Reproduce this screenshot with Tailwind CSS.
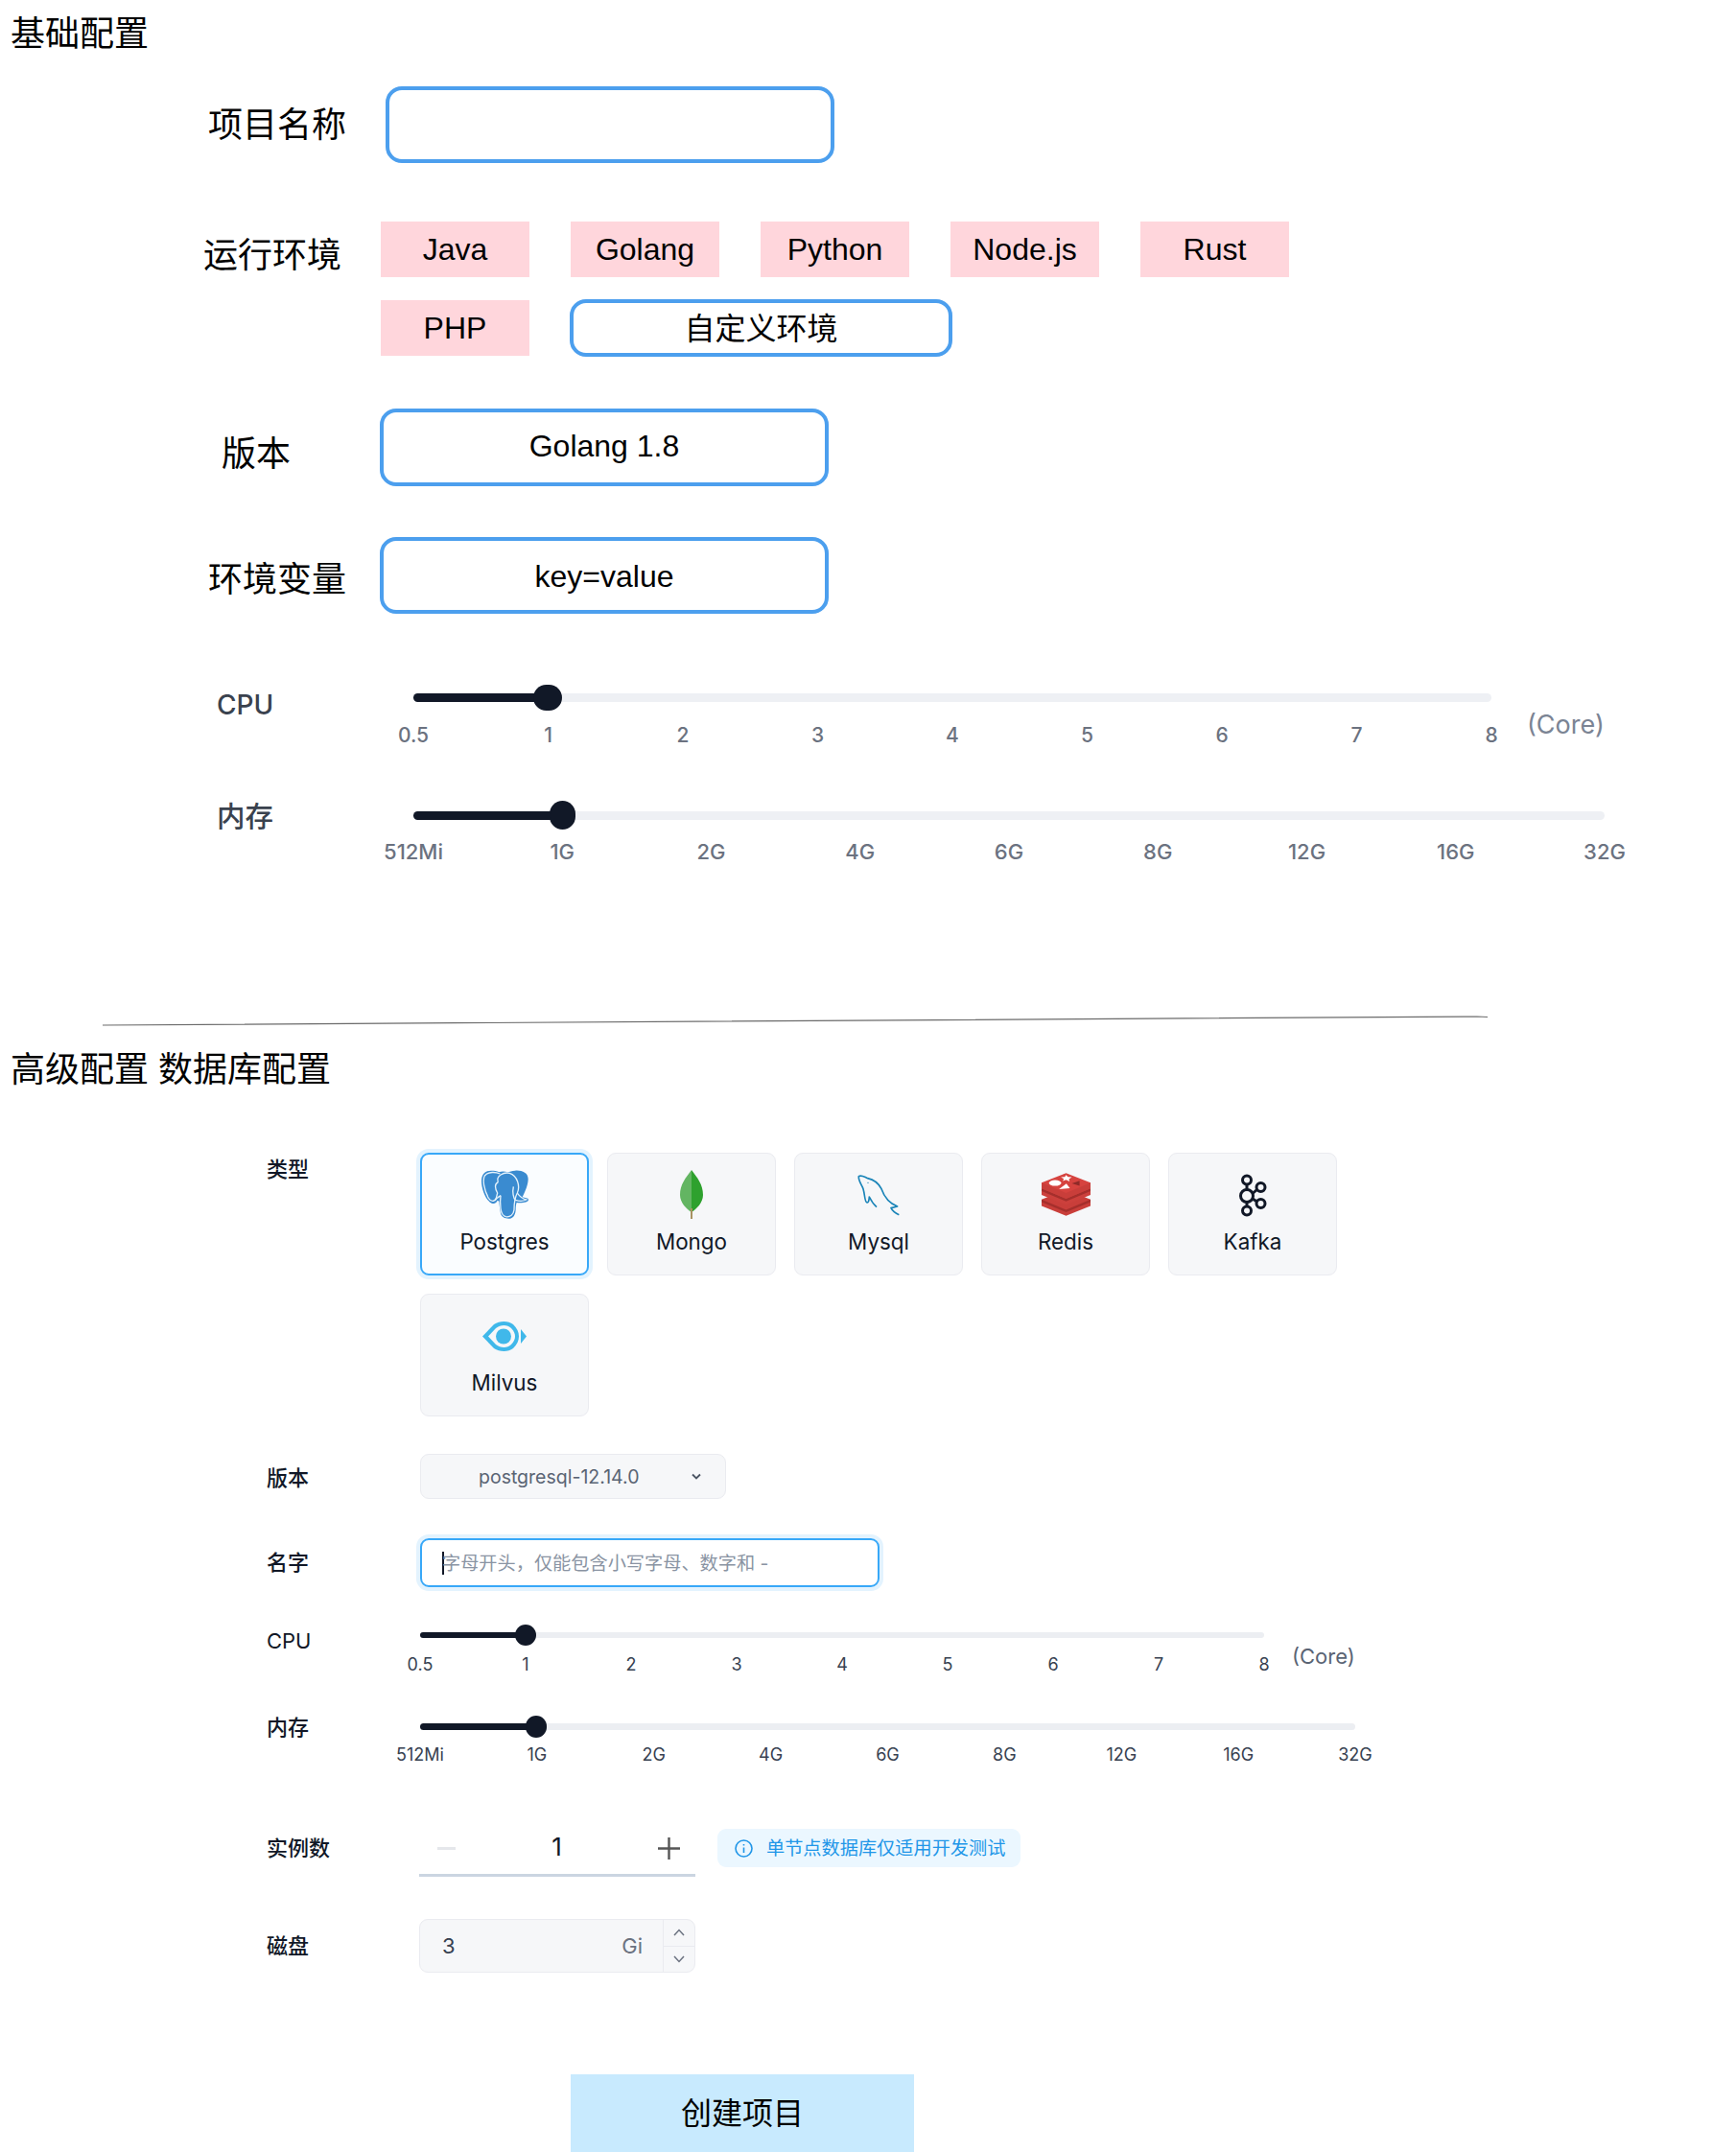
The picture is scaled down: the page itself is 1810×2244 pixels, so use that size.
<!DOCTYPE html>
<html lang="zh">
<head>
    <meta charset="UTF-8">
    <title>创建项目</title>
    <script src="https://cdn.jsdelivr.net/npm/@tailwindcss/browser@4"></script>
</head>
<body class="bg-white text-black [font-family:'Liberation_Sans','Noto_Sans_CJK_SC',sans-serif]">
<div class="w-[1810px] h-[2244px] overflow-hidden">

    <!-- 基础配置 -->
    <h2 class="pt-[18px] pl-[11px] text-[36px] leading-[36px] font-normal">基础配置</h2>

    <div class="flex mt-[36px]">
        <div class="w-[402px] pl-[217px] pt-[23px] text-[36px] leading-[36px]">项目名称</div>
        <input class="w-[468px] h-[80px] border-4 border-[#4c9fee] rounded-[17px] outline-none">
    </div>

    <div class="flex mt-[61px]">
        <div class="w-[397px] pl-[212px] pt-[18px] text-[36px] leading-[36px]">运行环境</div>
        <div class="w-[950px] flex flex-wrap items-center gap-x-[43px] gap-y-[23px] text-[32px]">
            <div class="w-[155px] h-[58px] bg-[#ffd6dc] flex items-center justify-center">Java</div>
            <div class="w-[155px] h-[58px] bg-[#ffd6dc] flex items-center justify-center">Golang</div>
            <div class="w-[155px] h-[58px] bg-[#ffd6dc] flex items-center justify-center">Python</div>
            <div class="w-[155px] h-[58px] bg-[#ffd6dc] flex items-center justify-center">Node.js</div>
            <div class="w-[155px] h-[58px] bg-[#ffd6dc] flex items-center justify-center">Rust</div>
            <div class="w-[155px] h-[58px] bg-[#ffd6dc] flex items-center justify-center">PHP</div>
            <div class="-ml-[1px] w-[399px] h-[60px] border-4 border-[#4c9fee] rounded-[17px] flex items-center justify-center pt-[2px]">自定义环境</div>
        </div>
    </div>

    <div class="flex mt-[54px]">
        <div class="w-[396px] pl-[231px] pt-[30px] text-[36px] leading-[36px]">版本</div>
        <div class="w-[468px] h-[81px] border-4 border-[#4c9fee] rounded-[17px] flex items-center justify-center text-[32px] pb-[4px]">Golang 1.8</div>
    </div>

    <div class="flex mt-[53px]">
        <div class="w-[396px] pl-[217px] pt-[27px] text-[36px] leading-[36px]">环境变量</div>
        <div class="w-[468px] h-[80px] border-4 border-[#4c9fee] rounded-[17px] flex items-center justify-center text-[32px] pt-[1px]">key=value</div>
    </div>

    <div class="flex mt-[83px] [font-family:'Inter','Noto_Sans_CJK_SC',sans-serif]">
        <div class="w-[431px] pl-[226px] -mt-[2px] text-[28px] leading-[28px] font-medium text-[#3a424e] h-0">CPU</div>
        <div class="w-[1124px]">
            <div class="relative h-[9px] rounded-full bg-[#eef0f4]">
                <div class="absolute left-0 top-0 w-[140px] h-[9px] rounded-full bg-[#111827]"></div>
                <div class="absolute left-[125px] -top-[9px] w-[30px] h-[27px] rounded-full bg-[#111827]"></div>
            </div>
            <div class="flex justify-between mt-[23px] text-[21px] leading-[24px] font-medium text-[#6b7280]">
                <span class="w-0 flex justify-center">0.5</span><span class="w-0 flex justify-center">1</span><span class="w-0 flex justify-center">2</span><span class="w-0 flex justify-center">3</span><span class="w-0 flex justify-center">4</span><span class="w-0 flex justify-center">5</span><span class="w-0 flex justify-center">6</span><span class="w-0 flex justify-center">7</span><span class="w-0 flex justify-center">8</span>
            </div>
        </div>
        <div class="ml-[37px] mt-[18px] text-[27px] leading-[30px] text-[#7b8494]">(Core)</div>
    </div>

    <div class="flex mt-[67px] [font-family:'Inter','Noto_Sans_CJK_SC',sans-serif]">
        <div class="w-[431px] pl-[226px] -mt-[10px] text-[29.5px] leading-[30px] font-medium text-[#3a424e] h-0">内存</div>
        <div class="w-[1242px]">
            <div class="relative h-[9px] rounded-full bg-[#eef0f4]">
                <div class="absolute left-0 top-0 w-[155px] h-[9px] rounded-full bg-[#111827]"></div>
                <div class="absolute left-[142px] -top-[11px] w-[27px] h-[30px] rounded-full bg-[#111827]"></div>
            </div>
            <div class="flex justify-between mt-[21px] text-[22px] leading-[24px] font-medium text-[#6b7280] whitespace-nowrap">
                <span class="w-0 flex justify-center">512Mi</span><span class="w-0 flex justify-center">1G</span><span class="w-0 flex justify-center">2G</span><span class="w-0 flex justify-center">4G</span><span class="w-0 flex justify-center">6G</span><span class="w-0 flex justify-center">8G</span><span class="w-0 flex justify-center">12G</span><span class="w-0 flex justify-center">16G</span><span class="w-0 flex justify-center">32G</span>
            </div>
        </div>
    </div>

    <svg class="block mt-[158px]" width="1810" height="12" viewBox="0 0 1810 12"><path d="M107 11 L1540 2 L1551 2.5" fill="none" stroke="#6b6b6b" stroke-width="1.2"/></svg>

    <!-- 高级配置 -->
    <h2 class="mt-[26px] pl-[11px] text-[36px] leading-[40px] font-normal">高级配置 数据库配置</h2>

    <div class="[font-family:'Inter','Noto_Sans_CJK_SC',sans-serif] text-[#111827]">
        <div class="flex mt-[66px]">
            <div class="w-[438px] pl-[278px] pt-[3px] text-[22px] leading-[28px] font-medium">类型</div>
            <div class="w-[960px] flex flex-wrap gap-[19px] text-[22.4px] leading-[28px]">
                <div class="w-[176px] h-[128px] rounded-[9px] border-2 border-[#38a8f8] bg-[#fafdff] ring-4 ring-[#e3f3fe] flex flex-col items-center">
                    <div class="h-[77px] pt-[8px] flex items-center">
                        <svg class="mt-[-2px]" width="49" height="51" viewBox="0 0 147 153">
                            <path d="M30 2C10 2 0 15 0 35C0 60 15 100 35 105C42 107 48 100 50 95L55 98C56 110 58 125 60 135C62 148 75 153 88 152C100 150 106 140 107 125C107 115 108 108 110 102C125 104 147 102 147 92C147 88 135 88 128 85C138 65 146 45 146 28C146 8 125 0 105 2C95 3 88 5 82 7C72 4 62 4 55 7C48 3 40 2 30 2Z" fill="#3a8bd0"/>
                            <path d="M58 12C45 6 22 4 10 18C3 30 7 60 22 88C30 100 40 100 46 88L50 72C42 58 40 44 52 38" fill="none" stroke="#e4f2fb" stroke-width="4"/>
                            <path d="M52 38C44 18 70 6 88 10C112 18 122 50 112 72C104 86 102 100 102 125C100 142 88 148 76 146C66 144 62 135 60 120C58 105 58 95 60 80" fill="none" stroke="#e4f2fb" stroke-width="4"/>
                            <path d="M60 80C50 86 44 92 42 96M112 72C120 84 128 90 140 93C130 98 118 98 106 94C100 88 96 70 100 52" fill="none" stroke="#e4f2fb" stroke-width="4"/>
                        </svg>
                    </div>
                    <span>Postgres</span>
                </div>
                <div class="w-[176px] h-[128px] rounded-[9px] border border-[#eaebf0] bg-[#f6f7f9] flex flex-col items-center">
                    <div class="h-[78px] pt-[7px] flex items-center">
                        <svg width="24" height="51" viewBox="0 0 24 51">
                            <path d="M12 0C6 8 0 15 0 26C0 34 7 41 12 44Z" fill="#63b562"/>
                            <path d="M12 0C18 8 24 15 24 26C24 34 17 41 12 44Z" fill="#2ea12e"/>
                            <path d="M12 40V51" stroke="#a89262" stroke-width="2"/>
                        </svg>
                    </div>
                    <span>Mongo</span>
                </div>
                <div class="w-[176px] h-[128px] rounded-[9px] border border-[#eaebf0] bg-[#f6f7f9] flex flex-col items-center">
                    <div class="h-[78px] pt-[7px] flex items-center">
                        <svg width="44" height="44" viewBox="70 58 132 132">
                            <path d="M130 162C122 155 112 140 107 130C106 140 106 148 100 148C92 146 94 125 88 105C84 92 72 80 74 66C82 60 92 68 102 72C120 76 135 86 145 105C152 125 165 148 195 160L175 165C180 175 190 182 200 186" fill="none" stroke="#1a84b8" stroke-width="5" stroke-linejoin="round"/>
                            <circle cx="103" cy="86" r="2" fill="#1a84b8"/>
                        </svg>
                    </div>
                    <span>Mysql</span>
                </div>
                <div class="w-[176px] h-[128px] rounded-[9px] border border-[#eaebf0] bg-[#f6f7f9] flex flex-col items-center">
                    <div class="h-[78px] pt-[7px] flex items-center">
                        <svg width="51" height="45" viewBox="0 0 152 133">
                            <path d="M0 82L76 52L152 82V102L76 133L0 102Z" fill="#c93e3a"/>
                            <path d="M0 82L76 114L152 82V90L76 122L0 90Z" fill="#a52f2c"/>
                            <path d="M0 48L76 18L152 48V68L76 99L0 68Z" fill="#cc403c"/>
                            <path d="M0 48L76 80L152 48V56L76 88L0 56Z" fill="#a52f2c"/>
                            <path d="M0 30L76 0L152 30V34L76 66L0 34Z" fill="#d6433f"/>
                            <path d="M0 30V48L76 80L152 48V30L76 62Z" fill="#c93e3a"/>
                            <ellipse cx="42" cy="31" rx="19" ry="9" fill="#fff"/>
                            <path d="M76 6L82 12L94 13L85 19L87 26L76 21L66 25L69 18L60 13L72 12Z" fill="#fff"/>
                            <path d="M54 50L88 47L77 33Z" fill="#fff"/>
                            <path d="M94 32L118 24L118 40Z" fill="#8f2a28"/>
                        </svg>
                    </div>
                    <span>Redis</span>
                </div>
                <div class="w-[176px] h-[128px] rounded-[9px] border border-[#eaebf0] bg-[#f6f7f9] flex flex-col items-center">
                    <div class="h-[78px] pt-[8px] flex items-center">
                        <svg width="30" height="45" viewBox="0 0 30 45">
                            <g fill="none" stroke="#111827" stroke-width="3">
                                <circle cx="9" cy="6.5" r="4.5"/><circle cx="9" cy="23" r="6.5"/><circle cx="9" cy="38.5" r="4.5"/><circle cx="23.5" cy="14" r="4.5"/><circle cx="23.5" cy="31" r="4.5"/>
                                <path d="M9 11V16.5M9 29.5V34M15 20.5L19.5 16.5M15 26L19.5 29"/>
                            </g>
                        </svg>
                    </div>
                    <span>Kafka</span>
                </div>
                <div class="w-[176px] h-[128px] rounded-[9px] border border-[#eaebf0] bg-[#f6f7f9] flex flex-col items-center">
                    <div class="h-[78px] pt-[9px] flex items-center">
                        <svg width="46" height="31" viewBox="0 0 46 31">
                            <path d="M0 15.5L12 3C18 -1 27 -1 32 3C36 7 38 11 38 15.5C38 20 36 24 32 28C27 32 18 32 12 28Z" fill="#40b8ea"/>
                            <path d="M6 15.5L14 7C19 3 26 3 30 7C33 10 34 13 34 15.5C34 18 33 21 30 24C26 28 19 28 14 24Z" fill="#f6f7f9"/>
                            <circle cx="22" cy="15.5" r="8" fill="#40b8ea"/>
                            <path d="M40 8L46 15.5L40 23Z" fill="#40b8ea"/>
                        </svg>
                    </div>
                    <span>Milvus</span>
                </div>
            </div>
        </div>

        <div class="flex items-center mt-[39px]">
            <div class="w-[438px] pl-[278px] pt-[3px] text-[22px] leading-[28px] font-medium">版本</div>
            <div class="relative w-[319px] h-[47px] rounded-[9px] border border-[#eaebf0] bg-[#f6f7f9] text-[19.5px] text-[#5a6474] flex items-center pl-[60px] pt-[3px]">
                postgresql-12.14.0
                <svg class="absolute left-[281px] top-[19px]" width="12" height="8" viewBox="0 0 12 8"><path d="M2 1.5L6 5.5L10 1.5" fill="none" stroke="#4b5563" stroke-width="1.8"/></svg>
            </div>
        </div>

        <div class="flex items-center mt-[41px]">
            <div class="w-[438px] pl-[278px] pb-[1px] text-[22px] leading-[28px] font-medium">名字</div>
            <div class="w-[479px] h-[51px] rounded-[9px] border-2 border-[#38a8f8] ring-4 ring-[#e3f3fe] flex items-center pl-[21px] pt-[1px] text-[19.2px] text-[#8a94a3]">
                <span class="w-[2px] h-[24px] bg-[#111827] -mr-[2px]"></span>字母开头&#xFF0C;仅能包含小写字母、数字和 -
            </div>
        </div>

        <div class="flex mt-[47px]">
            <div class="w-[438px] pl-[278px] -mt-[5px] text-[22px] leading-[28px] h-0">CPU</div>
            <div class="w-[880px]">
                <div class="relative h-[6px] rounded-full bg-[#eceef2]">
                    <div class="absolute left-0 top-0 w-[110px] h-[6px] rounded-full bg-[#111827]"></div>
                    <div class="absolute left-[99px] -top-[8px] w-[22px] h-[22px] rounded-full bg-[#111827]"></div>
                </div>
                <div class="flex justify-between mt-[17px] text-[18px] leading-[22px] text-[#374151]">
                    <span class="w-0 flex justify-center">0.5</span><span class="w-0 flex justify-center">1</span><span class="w-0 flex justify-center">2</span><span class="w-0 flex justify-center">3</span><span class="w-0 flex justify-center">4</span><span class="w-0 flex justify-center">5</span><span class="w-0 flex justify-center">6</span><span class="w-0 flex justify-center">7</span><span class="w-0 flex justify-center">8</span>
                </div>
            </div>
            <div class="ml-[29px] mt-[11px] text-[22px] leading-[28px] text-[#5a6474]">(Core)</div>
        </div>

        <div class="flex mt-[50px]">
            <div class="w-[438px] pl-[278px] -mt-[10px] text-[22px] leading-[28px] font-medium h-0">内存</div>
            <div class="w-[975px]">
                <div class="relative h-[7px] rounded-full bg-[#eceef2]">
                    <div class="absolute left-0 top-0 w-[121px] h-[7px] rounded-full bg-[#111827]"></div>
                    <div class="absolute left-[110px] -top-[8px] w-[22px] h-[23px] rounded-full bg-[#111827]"></div>
                </div>
                <div class="flex justify-between mt-[15px] text-[18px] leading-[22px] text-[#374151] whitespace-nowrap">
                    <span class="w-0 flex justify-center">512Mi</span><span class="w-0 flex justify-center">1G</span><span class="w-0 flex justify-center">2G</span><span class="w-0 flex justify-center">4G</span><span class="w-0 flex justify-center">6G</span><span class="w-0 flex justify-center">8G</span><span class="w-0 flex justify-center">12G</span><span class="w-0 flex justify-center">16G</span><span class="w-0 flex justify-center">32G</span>
                </div>
            </div>
        </div>

        <div class="flex items-start mt-[59px]">
            <div class="w-[437px] pl-[278px] pt-[13px] text-[22px] leading-[28px] font-medium">实例数</div>
            <div class="w-[288px] h-[57px] border-b-[3px] border-[#cbd5e1] flex items-center justify-between pl-[19px] pr-[16px]">
                <span class="w-[19px] h-[3px] bg-[#e5e7eb]"></span>
                <span class="text-[26px] pb-[3px]">1</span>
                <svg width="23" height="23" viewBox="0 0 23 23"><path d="M11.5 0V23M0 11.5H23" stroke="#555" stroke-width="2.4"/></svg>
            </div>
            <div class="ml-[23px] mt-[7px] w-[316px] h-[40px] rounded-[9px] bg-[#ebf7ff] flex items-center pl-[18px] text-[19.2px] text-[#2196e8]">
                <svg width="19" height="19" viewBox="0 0 19 19" fill="none" stroke="#2196e8" stroke-width="1.6"><circle cx="9.5" cy="9.5" r="8.5"/><path d="M9.5 8.5V14M9.5 5V6.6"/></svg>
                <span class="ml-[14px] whitespace-nowrap">单节点数据库仅适用开发测试</span>
            </div>
        </div>

        <div class="flex items-center mt-[44px]">
            <div class="w-[437px] pl-[278px] text-[22px] leading-[28px] font-medium">磁盘</div>
            <div class="w-[288px] h-[56px] rounded-[9px] border border-[#eaebf0] bg-[#f6f7f9] flex items-center">
                <span class="ml-[23px] text-[22px] text-[#374151]">3</span>
                <span class="ml-auto mr-[21px] text-[22px] text-[#6b7280]">Gi</span>
                <div class="w-[33px] h-full border-l border-[#eaebf0] flex flex-col">
                    <div class="flex-1 flex items-center justify-center border-b border-[#eaebf0]"><svg width="12" height="8" viewBox="0 0 12 8"><path d="M1 7L6 1.5L11 7" fill="none" stroke="#6b7280" stroke-width="1.5"/></svg></div>
                    <div class="flex-1 flex items-center justify-center"><svg width="12" height="8" viewBox="0 0 12 8"><path d="M1 1L6 6.5L11 1" fill="none" stroke="#6b7280" stroke-width="1.5"/></svg></div>
                </div>
            </div>
        </div>
    </div>

    <button class="block ml-[595px] mt-[106px] w-[358px] h-[81px] bg-[#c8eafe] text-[32px]">创建项目</button>
</div>
</body>
</html>
